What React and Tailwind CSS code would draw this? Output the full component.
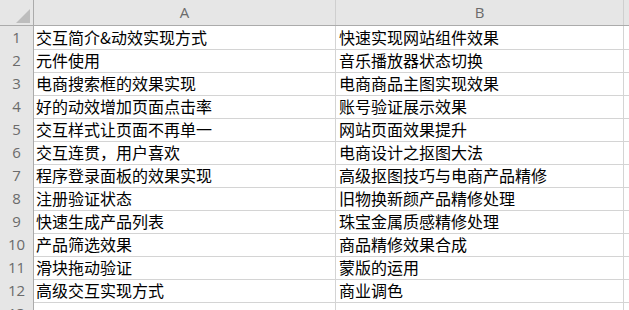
const rows = [
  ["交互简介&动效实现方式", "快速实现网站组件效果"],
  ["元件使用", "音乐播放器状态切换"],
  ["电商搜索框的效果实现", "电商商品主图实现效果"],
  ["好的动效增加页面点击率", "账号验证展示效果"],
  ["交互样式让页面不再单一", "网站页面效果提升"],
  ["交互连贯，用户喜欢", "电商设计之抠图大法"],
  ["程序登录面板的效果实现", "高级抠图技巧与电商产品精修"],
  ["注册验证状态", "旧物换新颜产品精修处理"],
  ["快速生成产品列表", "珠宝金属质感精修处理"],
  ["产品筛选效果", "商品精修效果合成"],
  ["滑块拖动验证", "蒙版的运用"],
  ["高级交互实现方式", "商业调色"],
  ["", ""],
];

const cjk = { fontFamily: '"Noto Sans CJK SC", "Noto Sans", sans-serif' };
const num = { fontFamily: '"Open Sans", "Liberation Sans", sans-serif' };

export default function App() {
  return (
    <div className="w-[629px] h-[310px] overflow-hidden bg-white">
      {/* header */}
      <div className="grid grid-cols-[34px_302px_288px_1fr] h-[26px] bg-[#e6e6e6] border-b border-[#ababab]">
        <div className="relative border-r border-[#ababab]">
          <svg className="absolute right-[3px] bottom-[2px]" width="14" height="14" viewBox="0 0 14 14">
            <polygon points="14,0 14,14 0,14" fill="#bdbdbd" />
          </svg>
        </div>
        <div className="flex items-center justify-center border-r border-[#cfcfcf] text-[15px] text-[#6b6b6b]" style={num}>A</div>
        <div className="flex items-center justify-center border-r border-[#cfcfcf] text-[15px] text-[#6b6b6b]" style={num}>B</div>
        <div />
      </div>

      {rows.map((r, i) => (
        <div key={i} className="grid grid-cols-[34px_302px_288px_1fr] h-[23px]">
          <div className="flex items-center justify-center bg-[#e6e6e6] border-r border-b border-[#ababab] text-[15px] text-[#6b6b6b]" style={num}>
            {i + 1}
          </div>
          <div className="flex items-center pl-[2px] border-r border-b border-[#d4d4d4] text-[16px] leading-[22px] text-black whitespace-nowrap" style={cjk}>
            {r[0]}
          </div>
          <div className="flex items-center pl-[3px] border-r border-b border-[#d4d4d4] text-[16px] leading-[22px] text-black whitespace-nowrap" style={cjk}>
            {r[1]}
          </div>
          <div className="border-b border-[#d4d4d4]" />
        </div>
      ))}
    </div>
  );
}
